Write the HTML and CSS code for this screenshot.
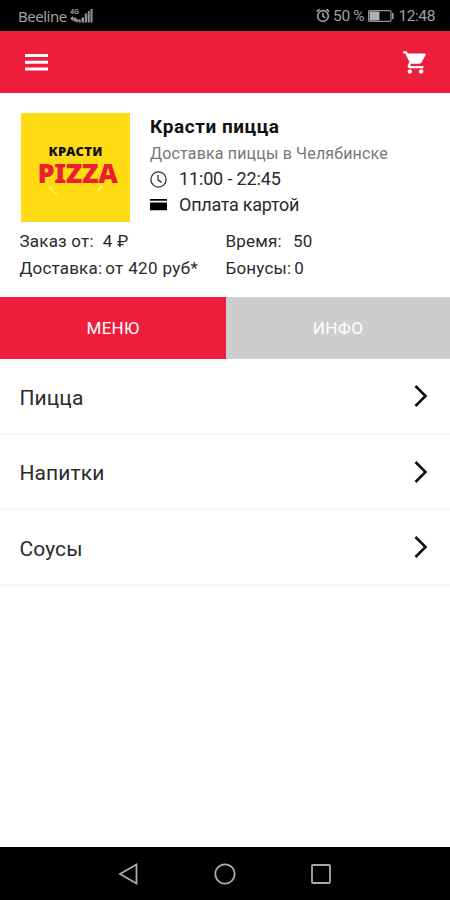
FILE: index.html
```html
<!DOCTYPE html>
<html lang="ru">
<head>
  <meta charset="UTF-8" />
  <meta name="viewport" content="width=device-width, initial-scale=1.0" />
  <title>Красти пицца</title>
  <link rel="stylesheet" href="styles.css">
</head>
<body>
  <div class="status-bar">
    <div class="status-left">
      <span class="carrier">Beeline</span>
      <svg class="signal" width="23" height="16" viewBox="0 0 23 16">
        <text x="0" y="6" font-size="7">4G</text>
        <path d="M0 10.500l3-2.500v1.500h3v2h-3v1.500zM9 12.500l-2.500-2.500v1.500h-3v2h3v1.500z" />
        <path d="M8.500 11.500h2.200v3h-2.200zM11.500 9.500h2.500v5h-2.500zM14.800 5.500h2.300v9h-2.300zM17.800 3h2v11.500h-2zM20.500 1h2.100v13.500h-2.100z" />
      </svg>
    </div>
    <div class="status-right">
      <svg class="alarm" width="14" height="15" viewBox="0 0 14 15" fill="none" stroke="#a0a0a0" stroke-width="1.700">
        <circle cx="7" cy="8" r="5.300" />
        <path d="M7 4.800v3.600l2.300 1.500M.8 3.600L3.600 1.200M13.200 3.600l-2.800-2.400" />
      </svg>
      <span class="charge">50 %</span>
      <svg class="battery" width="26" height="12" viewBox="0 0 26 12">
        <rect x=".6" y=".6" width="22.300" height="10.800" rx="1" fill="none" stroke="#929292" stroke-width="1.200" />
        <rect x="1.500" y="1.500" width="10" height="9" fill="#b0b0b0" />
        <rect x="24" y="3" width="1.600" height="6" fill="#a0a0a0" />
      </svg>
      <span class="clock">12:48</span>
    </div>
  </div>

  <header class="header">
    <svg width="23" height="17" viewBox="0 0 23 17" fill="#fff">
      <path d="M0 0h23v3H0zM0 6.700h23v3H0zM0 13.500h23v3H0z" />
    </svg>
    <svg class="cart" width="27" height="27" viewBox="0 0 24 24" fill="#fff">
      <path d="M7 18c-1.100 0-1.990.9-1.990 2S5.900 22 7 22s2-.9 2-2-.9-2-2-2zM1 2v2h2l3.600 7.590-1.350 2.450c-.16.280-.25.610-.25.960 0 1.100.9 2 2 2h12v-2H7.420c-.14 0-.25-.11-.25-.25l.03-.12.900-1.630h7.450c.75 0 1.410-.41 1.750-1.030l3.580-6.490c.08-.14.120-.31.120-.48 0-.55-.45-1-1-1H5.210l-.94-2H1zm16 16c-1.100 0-1.990.9-1.990 2s.89 2 1.990 2 2-.9 2-2-.9-2-2-2z" />
    </svg>
  </header>

  <section class="shop">
    <div class="shop-top">
      <div class="logo">
        <span class="logo-name">КРАСТИ</span>
        <span class="logo-pizza">PIZZA</span>
        <svg class="logo-smile" width="60" height="14" viewBox="0 0 60 14" fill="none" stroke="#ffee84" stroke-width="1.500">
          <path d="M3 1l3 3M7 5l4 3M52 5l5-6" />
        </svg>
      </div>
      <div class="shop-info">
        <h1>Красти пицца</h1>
        <p class="about">Доставка пиццы в Челябинске</p>
        <p class="line">
          <svg width="17" height="17" viewBox="0 0 17 17" fill="none" stroke="#333" stroke-width="1.300">
            <circle cx="8.500" cy="8.500" r="7.600" />
            <path d="M8 4v4.800l3.600 2.600" />
          </svg>
          <span class="hours">11:00 - 22:45</span>
        </p>
        <p class="line">
          <svg width="17" height="17" viewBox="0 0 17 17">
            <path d="M0 2h17v1.800H0zM0 5.500h17v7.800H0z" />
          </svg>
          <span class="pay">Оплата картой</span>
        </p>
      </div>
    </div>
    <div class="terms">
      <div class="term"><span>Заказ от:</span><span class="term-sum">4 ₽</span></div>
      <div class="term"><span>Время:</span><span class="term-min">50</span></div>
      <div class="term"><span>Доставка:</span><span class="term-price">от 420 руб*</span></div>
      <div class="term"><span>Бонусы:</span><span class="term-points">0</span></div>
    </div>
  </section>

  <nav class="tabs">
    <div class="tab active">МЕНЮ</div>
    <div class="tab">ИНФО</div>
  </nav>

  <main class="menu">
    <div class="menu-item">
      <span>Пицца</span>
      <svg class="arrow" width="14" height="24" viewBox="0 0 14 24"><path d="M1.500 2L11.500 12L1.500 22" /></svg>
    </div>
    <div class="menu-item">
      <span>Напитки</span>
      <svg class="arrow" width="14" height="24" viewBox="0 0 14 24"><path d="M1.500 2L11.500 12L1.500 22" /></svg>
    </div>
    <div class="menu-item">
      <span>Соусы</span>
      <svg class="arrow" width="14" height="24" viewBox="0 0 14 24"><path d="M1.500 2L11.500 12L1.500 22" /></svg>
    </div>
  </main>

  <footer class="nav-bar">
    <svg width="22" height="22" viewBox="0 0 22 22"><path d="M18.500 1.500v19L2 11z" /></svg>
    <svg width="22" height="22" viewBox="0 0 22 22"><circle cx="11" cy="11" r="9.700" /></svg>
    <svg width="22" height="22" viewBox="0 0 22 22"><rect x="2" y="2" width="18" height="18" rx="1" /></svg>
  </footer>
</body>
</html>
```

FILE: styles.css
```css
* {
  box-sizing: border-box;
}
body {
  display: flex;
  flex-direction: column;
  height: 900px;
  margin: 0;
  background: #fff;
  color: #2a2a2a;
  font-family: Roboto, "Liberation Sans", sans-serif;
  overflow: hidden;
}
svg {
  display: block;
  flex: none;
}
h1, p {
  margin: 0;
}
span {
  white-space: nowrap;
}

.status-bar {
  display: flex;
  justify-content: space-between;
  height: 31px;
  padding: 0 15px 0 18px;
  background: #000;
  color: #a0a0a0;
  line-height: 32px;
}
.status-left, .status-right {
  display: flex;
  align-items: center;
}
.carrier {
  font-family: "Noto Sans", sans-serif;
  font-size: 15px;
  letter-spacing: -0.5px;
}
.signal {
  margin-left: 3px;
  fill: #929292;
  font-weight: bold;
}
.alarm {
  margin-right: 3px;
}
.charge {
  font-size: 15.5px;
  letter-spacing: -0.3px;
}
.battery {
  margin: 0 4px;
}
.clock {
  font-size: 15.5px;
  letter-spacing: -0.4px;
}

.header {
  display: flex;
  justify-content: space-between;
  align-items: center;
  height: 62px;
  padding: 0 21px 0 25px;
  background: #ef1d3c;
}

.shop {
  height: 204px;
  padding: 20px 20px 0 21px;
}
.shop-top {
  display: flex;
  gap: 20px;
}
.logo {
  display: flex;
  flex-direction: column;
  align-items: center;
  width: 109px;
  height: 109px;
  padding-top: 31px;
  background: #ffdb13;
  font-family: "Noto Sans", sans-serif;
}
.logo-name {
  color: #111;
  font-size: 13px;
  font-weight: 900;
  line-height: 15px;
  letter-spacing: 0.3px;
}
.logo-pizza {
  padding-left: 4px;
  color: #e9202e;
  font-size: 27px;
  font-weight: 900;
  line-height: 27px;
  letter-spacing: -0.3px;
}
.shop-info h1 {
  color: #111;
  font-size: 19px;
  font-weight: 700;
  line-height: 28px;
  letter-spacing: 0.55px;
}
.about {
  color: #777;
  font-size: 16px;
  line-height: 25px;
  letter-spacing: 0.17px;
}
.line {
  display: flex;
  align-items: center;
  gap: 12px;
  font-size: 18px;
  line-height: 26px;
}
.hours {
  letter-spacing: -0.15px;
}
.pay {
  letter-spacing: -0.25px;
}
.terms {
  display: grid;
  grid-template-columns: 206px 1fr;
  grid-auto-rows: 27px;
  margin: 6px 0 0 -1.5px;
  font-size: 17px;
  line-height: 26px;
  letter-spacing: 0.2px;
}
.term-sum {
  margin-left: 9px;
}
.term-min {
  margin-left: 11px;
}
.term-price {
  margin-left: 3px;
  letter-spacing: 0.35px;
}
.term-points {
  margin-left: 3px;
}

.tabs {
  display: flex;
  height: 62px;
}
.tab {
  flex: 1;
  background: #cdcdcd;
  color: #fff;
  font-size: 17px;
  line-height: 63px;
  text-align: center;
  letter-spacing: 0.3px;
}
.tab.active {
  flex: 0 0 226px;
  background: #ef1d3c;
}

.menu {
  flex: 1;
}
.menu-item {
  display: flex;
  justify-content: space-between;
  align-items: center;
  height: 75.5px;
  padding: 4px 22px 0 19.5px;
  border-bottom: 2px solid #f6f6f6;
  font-size: 21px;
  letter-spacing: 0.1px;
}
.arrow {
  margin-top: -3px;
  fill: none;
  stroke: #111;
  stroke-width: 2.6;
}

.nav-bar {
  display: flex;
  justify-content: center;
  gap: 74px;
  height: 53px;
  padding-top: 16px;
  background: #000;
}
.nav-bar svg {
  fill: none;
  stroke: #aaa;
  stroke-width: 1.8;
}
```
